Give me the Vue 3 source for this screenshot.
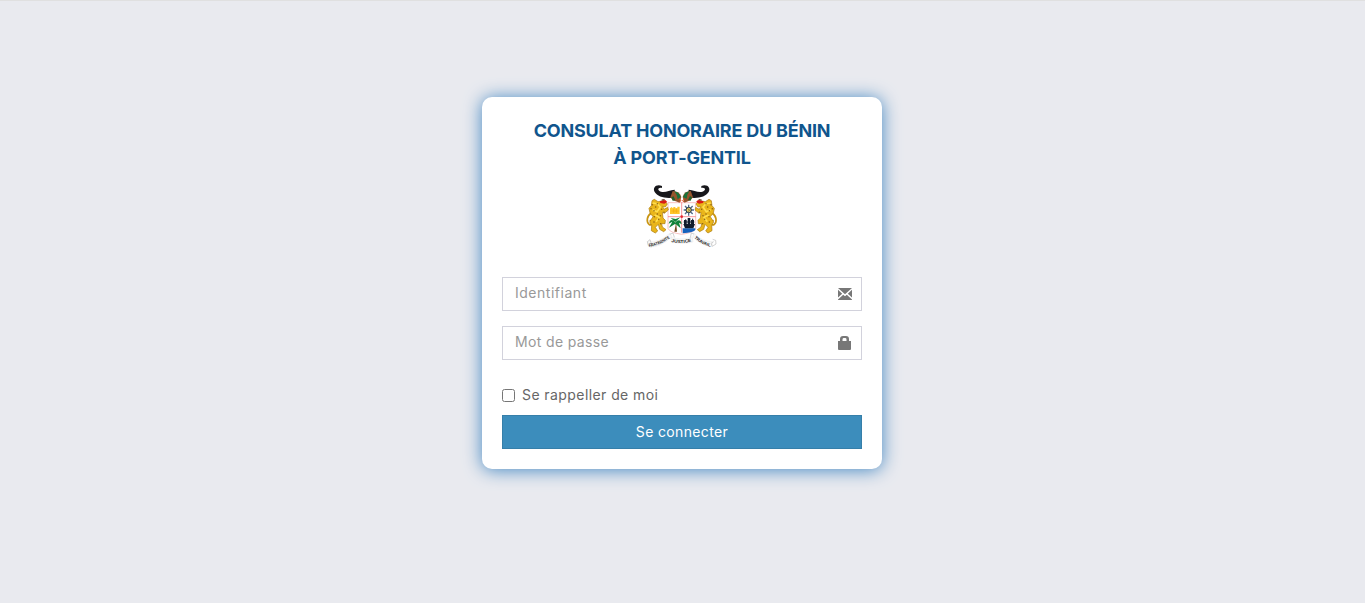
<script setup>
import { ref } from 'vue'

const username = ref('')
const password = ref('')
const remember = ref(false)
const spots = [[37, 80], [47, 87], [42, 98], [52, 108], [43, 116], [56, 124], [65, 94], [72, 103], [42, 132], [62, 137], [52, 77], [33, 92], [61, 113]]
</script>

<template>
  <main class="page">
    <form class="card" @submit.prevent>
      <h1 class="title"><span class="line1">CONSULAT HONORAIRE DU BÉNIN</span><br><span class="line2">À PORT-GENTIL</span></h1>
      <svg class="crest" viewBox="0 0 252 228" role="img">
        <defs>
          <path id="motto-left" d="M27 206Q58 204 91 179" />
          <path id="motto-mid" d="M94 192Q125 199 158 190" />
          <path id="motto-right" d="M163 180Q184 201 217 207" />
          <g id="leopard">
            <path d="M34 105C20 114 18 132 28 140C39 145 40 124 29 128" fill="none" stroke="#c99512" stroke-width="5" />
            <path d="M36 68L43 64L54 71L72 68L82 78L76 87L68 85L72 94L83 88L85 96L73 106L67 103L69 120L76 127L75 137L65 137L67 147L78 155L71 161L59 154L55 139L46 148L53 159L46 165L34 158L35 142L29 132L39 116L30 105L27 91L34 83Z" fill="#e9b51b" stroke="#a97811" stroke-width="2" />
            <path d="M38 75L52 77L61 87L51 101L38 95M44 111L58 118L48 131" fill="none" stroke="#ffdf50" stroke-width="5" />
            <circle v-for="(s, i) in spots" :key="i" :cx="s[0]" :cy="s[1]" r="2.3" fill="#8a6115" />
            <path d="M59 70L76 66L82 72L73 77L61 75Z" fill="#d91c16" />
            <path d="M65 66L74 65" stroke="#45210d" stroke-width="3" />
          </g>
          <path id="horn" d="M66 24C47 17 37 31 44 42C53 57 78 63 106 58L104 35C88 36 76 45 63 41C51 38 53 27 66 30Z" fill="#17171b" />
        </defs>
        <path d="M84 74H167V151Q162 164 125 169Q89 164 84 151Z" fill="#fff" stroke="#f5a5a5" stroke-width="2" />
        <use href="#leopard" />
        <use href="#leopard" transform="translate(250 0) scale(-1 1)" />
        <use href="#horn" />
        <use href="#horn" transform="translate(250 0) scale(-1 1)" />
        <path d="M98 39Q120 39 124 57L119 74L99 67L91 58Z" fill="#96552c" />
        <path d="M152 39Q132 39 128 57L133 74L151 67L159 58Z" fill="#96552c" />
        <path d="M103 40L115 44L122 57L113 64L110 51ZM148 40L136 44L129 57L140 62L142 50Z" fill="#18723b" />
        <path d="M94 58L101 55L106 67L98 68ZM156 58L150 54L144 66L152 68Z" fill="#245f2c" />
        <path d="M118 64L123 67L119 72M133 64L128 67L131 72" fill="none" stroke="#de491e" stroke-width="3" />
        <path d="M125 73V164M84 116H167" stroke="#f06469" stroke-width="2" />
        <path d="M90 91L95 87L100 92V87H106V91H112V86H119V108H90Z" fill="#ffc62c" />
        <path d="M94 99H116M101 91V105M109 91V105" stroke="#f4a909" stroke-width="2" />
        <path d="M146 80V113M131 96H162M135 84L158 108M158 84L135 108" stroke="#526b8b" stroke-width="4" />
        <circle cx="146" cy="96" r="8" fill="#f4d75c" stroke="#24344b" stroke-width="3" />
        <path d="M143 91L149 97L143 101" fill="none" stroke="#24344b" stroke-width="2" />
        <path d="M104 130L107 141L103 161H111L109 139Z" fill="#754c1f" />
        <path d="M106 134C96 120 89 127 86 137L97 131L87 149L106 137L122 151L117 134L125 139C124 124 113 123 106 134ZM106 132L92 120L107 123L121 118Z" fill="#10833a" />
        <path d="M128 151H166V155Q162 163 128 166Z" fill="#1762bc" />
        <path d="M130 138H165L160 151H135ZM132 126H140V138H132ZM143 120H151V139H143ZM153 126H162V139H153Z" fill="#111c2d" />
        <path d="M131 132H163M137 124V144M158 122V144" stroke="#111c2d" stroke-width="3" />
        <circle cx="125" cy="116" r="4" fill="#e52630" />
        <path d="M22 191Q56 196 89 166L96 176Q61 209 28 207ZM94 178Q125 188 157 177L159 192Q126 201 93 191ZM162 166Q188 192 218 191L216 206Q180 202 159 176Z" fill="#f8f8f8" stroke="#dedede" stroke-width="1" />
        <g fill="none" stroke="#bbb" stroke-width="2">
          <path d="M30 185L22 191L25 203L34 207L33 194ZM89 169L99 165L103 178M162 168L154 165L151 179" />
          <path d="M218 184L227 187L228 198L217 205L213 196L221 191" />
        </g>
        <g class="motto">
          <text><textPath href="#motto-left" textLength="69" lengthAdjust="spacingAndGlyphs">FRATERNITE</textPath></text>
          <text><textPath href="#motto-mid" textLength="61" lengthAdjust="spacingAndGlyphs">JUSTICE</textPath></text>
          <text><textPath href="#motto-right" textLength="55" lengthAdjust="spacingAndGlyphs">TRAVAIL</textPath></text>
        </g>
      </svg>
      <div class="field">
        <input v-model="username" class="user" type="text" placeholder="Identifiant">
        <svg viewBox="0 0 14 12" class="mail"><path d="M0 0H14L7 6.2Z M0 1.8L4.2 5.8L0 9.6Z M14 1.8V9.6L9.8 5.8Z M0 12V11.4L5.2 6.8L7 8.3L8.8 6.8L14 11.4V12Z" fill="#777" /></svg>
      </div>
      <div class="field">
        <input v-model="password" class="pass" type="password" placeholder="Mot de passe">
        <svg viewBox="0 0 13 14" class="lock"><path d="M0 5H2V3Q2 0 5 0H8Q11 0 11 3V5H13V13Q13 14 12 14H1Q0 14 0 13ZM4.5 5H8.5V3.5Q8.5 2 7.5 2H5.5Q4.5 2 4.5 3.5Z" fill="#777" fill-rule="evenodd" /></svg>
      </div>
      <label class="remember"><input v-model="remember" type="checkbox"><span>Se rappeller de moi</span></label>
      <button type="submit">Se connecter</button>
    </form>
  </main>
</template>

<style>
body { background: #e9eaef; }
</style>

<style scoped>
* { box-sizing: border-box; }
.page { height: 603px; border-top: 1px solid #e0e0e0; padding-top: 96px; padding-right: 1px; font-family: Inter, "Open Sans", sans-serif; font-size: 14px; }
.card { width: 400px; height: 372px; margin: 0 auto; padding: 20px; border-radius: 10px; background: #fff; box-shadow: 0 1px 18px #4387c2; display: flex; flex-direction: column; }
.title { margin: 0; text-align: center; font-size: 18px; line-height: 27px; font-weight: 700; color: #10558d; }
.line1 { letter-spacing: -0.21px; }
.line2 { letter-spacing: -0.2px; }
.crest { display: block; width: 84px; height: 76px; margin: 7px auto 23px; flex: none; }
.motto { font: 700 13px "Liberation Sans", sans-serif; fill: #222; }
.field { position: relative; height: 34px; margin-bottom: 15px; flex: none; }
.field input { display: block; width: 100%; height: 34px; border: 1px solid #d2d2dc; padding: 5px 42px 8px 12px; background: #fff; border-radius: 0; font: inherit; line-height: 18px; color: #555; outline: none; }
.field input::placeholder { color: #999; opacity: 1; }
.field .user { letter-spacing: 0.52px; }
.field .pass { letter-spacing: 0.35px; }
.mail, .lock { position: absolute; }
.mail { width: 14px; height: 12px; right: 10px; top: 11px; }
.lock { width: 13px; height: 14px; right: 11px; top: 10px; }
.remember { display: flex; align-items: center; height: 20px; margin-top: 10px; margin-bottom: 10px; color: #666; letter-spacing: 0.42px; }
.remember span { padding-bottom: 2px; }
.remember input { width: 13px; height: 13px; margin: 0 7px 0 0; }
button { height: 34px; flex: none; border: 1px solid #367fa9; background: #3c8dbc; color: #fff; font: inherit; letter-spacing: 0.35px; padding: 0 0 2px; }
</style>
